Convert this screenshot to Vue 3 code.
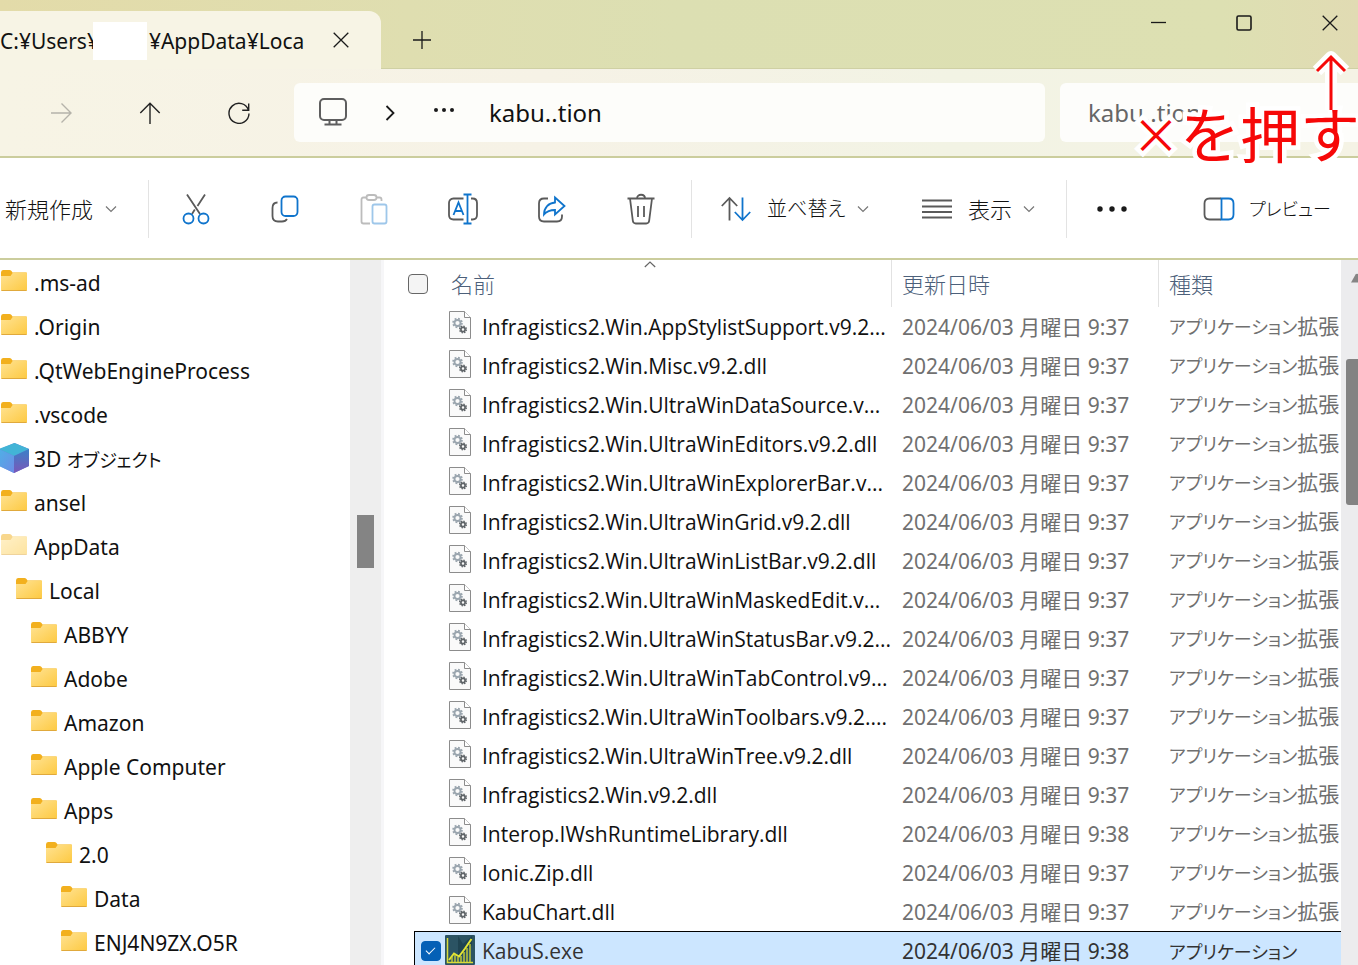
<script setup>
import { ref } from 'vue'

const tree = [
  { name: '.ms-ad', level: 0 },
  { name: '.Origin', level: 0 },
  { name: '.QtWebEngineProcess', level: 0 },
  { name: '.vscode', level: 0 },
  { name: '3D ', kana: 'オブジェクト', level: 0, kind: 'cube' },
  { name: 'ansel', level: 0 },
  { name: 'AppData', level: 0, kind: 'hidden' },
  { name: 'Local', level: 1 },
  { name: 'ABBYY', level: 2 },
  { name: 'Adobe', level: 2 },
  { name: 'Amazon', level: 2 },
  { name: 'Apple Computer', level: 2 },
  { name: 'Apps', level: 2 },
  { name: '2.0', level: 3 },
  { name: 'Data', level: 4 },
  { name: 'ENJ4N9ZX.O5R', level: 4 },
]

const dll = (name, time = '9:37') => ({
  name,
  date: `2024/06/03 月曜日 ${time}`,
  suffix: '拡張',
})

const files = [
  dll('Infragistics2.Win.AppStylistSupport.v9.2...'),
  dll('Infragistics2.Win.Misc.v9.2.dll'),
  dll('Infragistics2.Win.UltraWinDataSource.v...'),
  dll('Infragistics2.Win.UltraWinEditors.v9.2.dll'),
  dll('Infragistics2.Win.UltraWinExplorerBar.v...'),
  dll('Infragistics2.Win.UltraWinGrid.v9.2.dll'),
  dll('Infragistics2.Win.UltraWinListBar.v9.2.dll'),
  dll('Infragistics2.Win.UltraWinMaskedEdit.v...'),
  dll('Infragistics2.Win.UltraWinStatusBar.v9.2...'),
  dll('Infragistics2.Win.UltraWinTabControl.v9...'),
  dll('Infragistics2.Win.UltraWinToolbars.v9.2....'),
  dll('Infragistics2.Win.UltraWinTree.v9.2.dll'),
  dll('Infragistics2.Win.v9.2.dll'),
  dll('Interop.IWshRuntimeLibrary.dll', '9:38'),
  dll('Ionic.Zip.dll'),
  dll('KabuChart.dll'),
  { name: 'KabuS.exe', date: '2024/06/03 月曜日 9:38', suffix: '', selected: true },
]

const query = ref('kabu..tion')
const allChecked = ref(false)
const exeChecked = ref(true)
</script>

<template>
  <div class="window">
    <header class="titlebar">
      <div class="tab">
        <span class="tab-title"><span>C:¥Users¥</span><span class="mask"></span><span>¥AppData¥Loca</span></span>
        <button class="tab-close" aria-label="タブを閉じる">
          <svg width="16" height="16" viewBox="0 0 16 16"><path d="M.7.7l14.6 14.6M15.3.7L.7 15.3" /></svg>
        </button>
      </div>
      <button class="tab-new" aria-label="新しいタブ">
        <svg width="18" height="18" viewBox="0 0 18 18"><path d="M9 0v18M0 9h18" /></svg>
      </button>
      <div class="controls">
        <button aria-label="最小化"><svg width="16" height="16" viewBox="0 0 16 16"><path d="M1 7.500h15" /></svg></button>
        <button aria-label="最大化"><svg width="16" height="16" viewBox="0 0 16 16"><rect x="1" y="1" width="14" height="14" rx="1.5" stroke-width="1.6" /></svg></button>
        <button aria-label="閉じる"><svg width="16" height="16" viewBox="0 0 16 16"><path d="M.7.7l14.6 14.6M15.3.7L.7 15.3" /></svg></button>
      </div>
    </header>

    <nav class="navbar">
      <button class="nav-btn disabled" aria-label="進む" disabled>
        <svg width="22" height="22" viewBox="0 0 22 22"><path d="M1 11h20M11.500 1.500L21 11l-9.500 9.500" /></svg>
      </button>
      <button class="nav-btn" aria-label="上へ">
        <svg width="22" height="22" viewBox="0 0 22 22"><path d="M11 22V1.500M1.300 11L11 1.300 20.700 11" /></svg>
      </button>
      <button class="nav-btn" aria-label="更新">
        <svg width="22" height="22" viewBox="0 0 22 22"><path d="M20.500 8.200A10 10 0 1 0 21 11.500M20.700 1.500v6.700h-6.500" /></svg>
      </button>
      <div class="address">
        <button class="pc" aria-label="PC">
          <svg width="30" height="30" viewBox="0 0 30 30"><rect x="2" y="1" width="26" height="21" rx="4" /><path d="M11.500 22V26.500M18.500 22V26.500M6.500 26.500h17" /></svg>
        </button>
        <svg class="crumb-sep" width="10" height="16" viewBox="0 0 10 16"><path d="M1.500 1l7 7-7 7" /></svg>
        <button class="crumb-more" aria-label="その他の場所">
          <svg width="22" height="6" viewBox="0 0 22 6"><circle cx="3" cy="3" r="2" /><circle cx="11" cy="3" r="2" /><circle cx="19" cy="3" r="2" /></svg>
        </button>
        <button class="crumb">kabu..tion</button>
      </div>
      <input v-model="query" class="search" type="text" aria-label="検索" />
    </nav>

    <div class="toolbar">
      <button class="new">新規作成
        <svg class="chev" width="12" height="8" viewBox="0 0 12 8"><path d="M1 1.500l5 5 5-5" /></svg>
      </button>
      <span class="sep"></span>
      <div class="icons">
        <button aria-label="切り取り">
          <svg width="32" height="32" viewBox="0 0 32 32"><path class="g" d="M7 1.500l13 19.500M25 1.500L17.500 13M14.800 16.500L12 21" /><g class="b"><circle cx="8.500" cy="25.500" r="5" /><circle cx="23.500" cy="25.500" r="5" /></g></svg>
        </button>
        <button aria-label="コピー">
          <svg width="32" height="32" viewBox="0 0 32 32"><path class="g" d="M8.500 9.500C5 9.500 3.500 11.500 3.500 15v8c0 3.500 2 5.500 5.500 5.500h4c2.500 0 4-.7 5-2.500" /><rect class="b" x="12.500" y="3.500" width="16" height="19.500" rx="4" /></svg>
        </button>
        <button aria-label="貼り付け" disabled>
          <svg class="faded" width="32" height="32" viewBox="0 0 32 32"><path class="g" d="M8 4.500H5.500c-1.500 0-2 .8-2 2v22c0 1.500.8 2 2 2H12M19 4.500h2.500c1.500 0 2 .8 2 2V8" /><rect class="g" x="8.500" y="2" width="10" height="5" rx="2.500" /><rect class="b" x="14.500" y="11.500" width="14" height="19" rx="2" /></svg>
        </button>
        <button aria-label="名前の変更">
          <svg width="32" height="32" viewBox="0 0 32 32"><path class="g" d="M16.500 5.500h-10C3.500 5.500 2 7.500 2 10v12c0 3 2 4.500 4.500 4.500h10M24 5.500h1.500c3 0 4.500 2 4.500 4.500v12c0 3-2 4.500-4.500 4.500H24" /><path class="b" d="M16.500 1.500h8M16.500 30.500h8M20.500 1.500v29M6.500 22l5-12.500 5 12.500M8.500 18h6" /></svg>
        </button>
        <button aria-label="共有">
          <svg width="32" height="32" viewBox="0 0 32 32"><path class="g" d="M12 5.500H8C4.500 5.500 3 7.500 3 10.500v13c0 3.500 2 5 5 5h13c3.500 0 5-2 5-5v-2" /><path class="b" d="M19 4.500l9.500 8.500-9.500 8.500V17c-5 0-8 1-11 4.500 0-7 4.500-11.500 11-12z" /></svg>
        </button>
        <button aria-label="削除">
          <svg width="32" height="32" viewBox="0 0 32 32"><path class="g" d="M2.500 5.500h27M12 5.500c0-5 8-5 8 0M5 5.500l2.800 22c.2 2 1.200 3 3 3h10.400c1.800 0 2.800-1 3-3L27 5.500M13 13v11M19 13v11" /></svg>
        </button>
      </div>
      <span class="sep"></span>
      <button class="sort">
        <svg width="30" height="30" viewBox="0 0 30 30"><path class="g" d="M8.500 26.500V4M.8 12L8.500 4l7.700 8" /><path class="b" d="M21.500 3.500V26M13.800 18l7.700 8 7.700-8" /></svg>
        並べ替え
        <svg class="chev" width="12" height="8" viewBox="0 0 12 8"><path d="M1 1.500l5 5 5-5" /></svg>
      </button>
      <button class="view">
        <svg width="30" height="30" viewBox="0 0 30 30"><path class="g" d="M0 6.500h30M0 12.500h30M0 18h30M0 23.500h30" /></svg>
        表示
        <svg class="chev" width="12" height="8" viewBox="0 0 12 8"><path d="M1 1.500l5 5 5-5" /></svg>
      </button>
      <span class="sep"></span>
      <button class="more" aria-label="もっと見る">
        <svg width="30" height="6" viewBox="0 0 30 6"><circle cx="3" cy="3" r="2.700" /><circle cx="15" cy="3" r="2.700" /><circle cx="27" cy="3" r="2.700" /></svg>
      </button>
      <button class="preview">
        <svg width="32" height="24" viewBox="0 0 32 24"><path class="g" d="M18 1.500H6.500C3 1.500 1.500 3.500 1.500 6.500v11c0 3.500 2 5 5 5H18" /><path class="b" d="M18.500 1.500h7c3 0 5 2 5 5v11c0 3-2 5-5 5h-7z" /></svg>
        <span class="kana">プレビュー</span>
      </button>
    </div>

    <div class="body">
      <aside class="sidebar">
        <ul class="tree">
          <li v-for="node in tree" :key="node.name" :class="'level-' + node.level">
            <svg v-if="node.kind === 'cube'" width="30" height="30" viewBox="0 0 30 30">
              <path d="M14.500 0L29 6v17L14 30 0 23V6z" fill="#6a7fd6" />
              <path d="M14.500 0L29 6l-15 7L-1 6z" fill="#42b4d6" />
              <path d="M-1 6l15 7v17L-1 23z" fill="url(#cube-left)" />
              <path d="M14 13l15-7v17l-15 7z" fill="url(#cube-right)" />
            </svg>
            <svg v-else width="30" height="30" viewBox="0 0 30 30" :class="{ dim: node.kind === 'hidden' }">
              <path d="M1 5.500Q1 3 3 3h6.500q1 0 2 1l1 1.500H26q1 0 1 1V12H1z" fill="#f2b01e" />
              <path d="M1 9h9.500l2.500-3.500h13q1 0 1 1v16q0 1.500-1 1.500H2q-1 0-1-1.500z" fill="url(#folder-face)" />
              <path d="M1.500 23.500h25" stroke="#e0a93c" />
            </svg>
            <span class="node-name">{{ node.name }}<span v-if="node.kana" class="kana">{{ node.kana }}</span></span>
          </li>
        </ul>
        <div class="side-scroll"><div class="side-thumb"></div></div>
      </aside>

      <main class="files">
        <svg class="sort-mark" width="12" height="7" viewBox="0 0 12 7"><path d="M.8 6L6 1l5.200 5" /></svg>
        <table>
          <colgroup>
            <col class="c-gutter" /><col class="c-name" /><col class="c-date" /><col />
          </colgroup>
          <thead>
            <tr>
              <th colspan="2"><div class="name-head"><input v-model="allChecked" type="checkbox" aria-label="すべて選択" />名前</div></th>
              <th>更新日時</th>
              <th>種類</th>
            </tr>
          </thead>
          <tbody>
            <tr v-for="file in files" :key="file.name" :class="{ selected: file.selected }">
              <td></td>
              <td>
                <div class="name-cell">
                  <span class="check"><input v-if="file.selected" v-model="exeChecked" type="checkbox" :aria-label="file.name" /></span>
                  <svg v-if="file.selected" width="30" height="30" viewBox="0 0 30 30">
                    <rect width="30" height="30" rx="1" fill="#2b5363" />
                    <path d="M13 1l5 8 9-8v9L13 24z" fill="#1f4351" />
                    <path d="M2.500 3v24.500H28" fill="none" stroke="#d9dc3a" stroke-width="1.500" />
                    <path d="M4 25l5-6.500 5 3 6-8L26.500 4" fill="none" stroke="#e3e534" stroke-width="2" />
                    <path d="M7 22v5M10 20v7M13 22v5M16 21v6M19 17v10M22 13v14M25 9v18" stroke="#c9cf35" stroke-width="1.400" />
                  </svg>
                  <svg v-else width="30" height="30" viewBox="0 0 30 30">
                    <path d="M4.500 1.500h15l6 6v21h-21z" fill="#fafafa" stroke="#8c8c8c" />
                    <path d="M19.500 1.500v6h6" fill="#fff" stroke="#8c8c8c" />
                    <g fill="none">
                      <circle cx="12.500" cy="13" r="4.400" stroke="#9aa5ae" stroke-width="1.800" stroke-dasharray="1.800 1.655" />
                      <circle cx="12.500" cy="13" r="3" stroke="#9aa5ae" stroke-width="1.800" />
                      <circle cx="18" cy="19.500" r="3.300" stroke="#5f6468" stroke-width="1.500" stroke-dasharray="1.400 1.192" />
                      <circle cx="18" cy="19.500" r="2.100" stroke="#5f6468" stroke-width="1.700" />
                    </g>
                  </svg>
                  <span>{{ file.name }}</span>
                </div>
              </td>
              <td>{{ file.date }}</td>
              <td><span class="kana">アプリケーション</span>{{ file.suffix }}</td>
            </tr>
          </tbody>
        </table>
      </main>
      <div class="main-scroll">
        <svg width="14" height="10" viewBox="0 0 14 10"><path d="M1 9.500L5.500 1.500Q7 0 8.500 1.500L13 9.500z" /></svg>
        <div class="main-thumb"></div>
      </div>
    </div>

    <div class="note">
      <svg width="40" height="66" viewBox="0 0 40 66">
        <path class="halo" d="M20 60V7M6 21L20 7l14 14" />
        <path class="ink" d="M20 60V7M6 21L20 7l14 14" />
      </svg>
      <div class="note-text"><span class="cross">×</span>を押す</div>
    </div>

    <svg class="defs" width="0" height="0" aria-hidden="true">
      <defs>
        <linearGradient id="folder-face" x1="0" y1="0" x2="1" y2="1"><stop offset="0" stop-color="#ffe394" /><stop offset="1" stop-color="#fdc941" /></linearGradient>
        <linearGradient id="cube-left" x1="0" y1="0" x2="1" y2="1"><stop offset="0" stop-color="#4fb0e6" /><stop offset="1" stop-color="#6d8be6" /></linearGradient>
        <linearGradient id="cube-right" x1="0" y1="0" x2="0" y2="1"><stop offset="0" stop-color="#3a80c8" /><stop offset="1" stop-color="#7b57b8" /></linearGradient>
      </defs>
    </svg>
  </div>
</template>

<style>
body {
  margin: 0;
  overflow: hidden;
}
</style>

<style scoped>
.window {
  position: relative;
  display: flex;
  flex-direction: column;
  height: 100vh;
  overflow: hidden;
  background: #fff;
  color: #111;
  font-family: "Noto Sans", "Noto Sans CJK JP", sans-serif;
  font-size: 21px;
  line-height: 30px;
  font-feature-settings: "palt";
  white-space: nowrap;
}
button {
  display: flex;
  align-items: center;
  justify-content: center;
  flex: none;
  margin: 0;
  padding: 0;
  border: 0;
  background: none;
  color: inherit;
  font: inherit;
  font-feature-settings: inherit;
}
svg {
  display: block;
  flex: none;
  fill: none;
  stroke: none;
}
.titlebar {
  display: flex;
  flex: none;
  height: 69px;
  box-sizing: border-box;
  border-bottom: 1px solid #cfd0a4;
  background: linear-gradient(90deg, #e3dba9 0, #dfdeb0 30%, #dcdfb2 50%, #dde0b2 90%, #e1dbb3 100%);
}
.titlebar svg {
  stroke: #1a1a1a;
  stroke-width: 1.3;
}
.tab {
  display: flex;
  width: 381px;
  height: 58px;
  margin-top: 11px;
  background: #f7f4e5;
  border-radius: 0 12px 0 0;
}
.tab-title {
  display: flex;
  width: 306px;
  height: 60px;
  align-items: center;
}
.tab-title span {
  flex: none;
}
.mask {
  width: 54px;
  height: 38px;
  margin: 0 2px 0 -6px;
  background: #fff;
}
.tab-close {
  width: 70px;
  height: 57px;
}
.tab-new {
  width: 82px;
  height: 80px;
}
.controls {
  display: flex;
  height: 46px;
  margin-left: auto;
  margin-right: -15px;
}
.controls button {
  width: 86px;
}
.navbar {
  display: flex;
  flex: none;
  align-items: flex-start;
  height: 89px;
  box-sizing: border-box;
  padding: 14px 0 0 16px;
  border-bottom: 2px solid #cbcd9d;
  background: linear-gradient(90deg, #f7f4e5, #f6f2e6 40%, #f2f3e4 70%, #f5f3e5);
}
.nav-btn {
  width: 89px;
  height: 60px;
}
.nav-btn svg {
  stroke: #222;
  stroke-width: 1.4;
}
.nav-btn.disabled svg {
  stroke: #b5b3aa;
}
.address {
  display: flex;
  align-items: center;
  flex: 1;
  height: 59px;
  margin: 0 15px 0 11px;
  border-radius: 6px;
  background: #fdfdfa;
}
.pc {
  width: 78px;
  height: 54px;
}
.pc svg {
  stroke: #5e5e5e;
  stroke-width: 2;
}
.crumb-sep {
  margin: 0 18px 0 13px;
  stroke: #1a1a1a;
  stroke-width: 1.8;
}
.crumb-more {
  width: 62px;
  height: 50px;
}
.crumb-more svg {
  margin-bottom: 6px;
  fill: #1a1a1a;
}
.crumb {
  padding-left: 14px;
  font-size: 24px;
}
.search {
  flex: none;
  width: 298px;
  height: 59px;
  box-sizing: border-box;
  padding: 0 0 0 28px;
  border: 0;
  border-radius: 6px 0 0 6px;
  outline: 0;
  background: #fdfdfb;
  color: #666;
  font: inherit;
  font-size: 24px;
}
.toolbar {
  display: flex;
  flex: none;
  align-items: center;
  height: 102px;
  box-sizing: border-box;
  padding-top: 2px;
  border-bottom: 2px solid #cbcd9d;
  font-weight: 300;
  font-size: 22px;
}
.toolbar button {
  height: 60px;
}
.sep {
  flex: none;
  width: 1px;
  height: 58px;
  background: #e3e3e3;
}
.g {
  stroke: #5a5a5a;
  stroke-width: 1.8;
}
.b {
  stroke: #0f74cc;
  stroke-width: 1.8;
}
.faded {
  opacity: 0.4;
}
.chev {
  stroke: #777;
  stroke-width: 1.2;
}
.new .chev {
  margin-left: 12px;
}
.toolbar .new {
  width: 148px;
  justify-content: flex-start;
  padding-left: 5px;
}
.icons {
  display: flex;
  margin: 0 6px 0 2px;
}
.icons button {
  width: 89px;
}
.toolbar .sort {
  width: 200px;
  justify-content: flex-start;
  gap: 0 16px;
  padding-left: 29px;
  font-size: 20px;
}
.toolbar .sort .chev,
.toolbar .view .chev {
  margin-left: -5px;
}
.toolbar .view {
  width: 174px;
  justify-content: flex-start;
  gap: 0 16px;
  padding-left: 30px;
}
.more {
  width: 90px;
}
.more svg {
  fill: #1a1a1a;
}
.preview {
  gap: 14px;
  padding-left: 46px;
}
.body {
  display: flex;
  flex: 1;
  min-height: 0;
}
.sidebar {
  display: flex;
  flex: none;
  width: 381px;
  border-right: 3px solid #f6f6f8;
  overflow: hidden;
}
.tree {
  flex: 1;
  margin: 0;
  padding: 1px 0 0;
  list-style: none;
}
.tree li {
  display: flex;
  align-items: center;
  gap: 4px;
  height: 44px;
}
.tree svg {
  margin-bottom: 2px;
}
.node-name {
  white-space: pre;
}
.level-1 {
  padding-left: 15px;
}
.level-2 {
  padding-left: 30px;
}
.level-3 {
  padding-left: 45px;
}
.level-4 {
  padding-left: 60px;
}
.dim {
  opacity: 0.5;
}
.side-scroll {
  width: 31px;
  background: #eee;
}
.side-thumb {
  width: 17px;
  height: 53px;
  margin: 255px auto 0;
  background: #848484;
}
.files {
  position: relative;
  flex: 1;
  min-width: 0;
  overflow: hidden;
}
.sort-mark {
  position: absolute;
  left: 260px;
  top: 1px;
  stroke: #666;
  stroke-width: 1.2;
}
table {
  width: 100%;
  table-layout: fixed;
  border-collapse: separate;
  border-spacing: 0;
}
.c-gutter {
  width: 30px;
}
.c-name {
  width: 477px;
}
.c-date {
  width: 267px;
}
th,
td {
  box-sizing: border-box;
  padding: 0 0 0 11px;
  overflow: hidden;
  text-align: left;
}
th {
  height: 47px;
  padding-left: 10px;
  border-left: 1px solid #e2e2e2;
  color: #4c607a;
  font-weight: 300;
  font-size: 22px;
}
th:first-child {
  padding-left: 24px;
  border-left: 0;
}
.name-head {
  display: flex;
  align-items: center;
  gap: 23px;
}
td {
  height: 39px;
  color: #707070;
}
td:nth-child(2) {
  padding-left: 7px;
  color: #111;
  font-family: "Open Sans", "Noto Sans", sans-serif;
}
.name-cell {
  display: flex;
  align-items: center;
  height: 38px;
}
.name-cell svg {
  margin: 0 7px 3px 0;
}
.check {
  flex: none;
  width: 24px;
}
input[type="checkbox"] {
  display: block;
  flex: none;
  appearance: none;
  width: 20px;
  height: 20px;
  margin: 0;
  border: 1px solid #666;
  border-radius: 4px;
  background: #f4f4f4;
}
input[type="checkbox"]:checked {
  border-color: #0560b6;
  background: #0560b6;
}
input[type="checkbox"]:checked::before {
  content: "";
  display: block;
  width: 8px;
  height: 4px;
  margin: 5px 0 0 4px;
  border: solid #fff;
  border-width: 0 0 1px 1px;
  transform: rotate(-45deg);
}
.selected td:not(:first-child) {
  border-top: 1px solid #000;
  background: #cce6ff;
  color: #333;
}
.selected td:nth-child(2) {
  border-left: 1px solid #000;
  padding-left: 6px;
}
.kana {
  font-size: 18px;
}
.main-scroll {
  flex: none;
  width: 17px;
  overflow: hidden;
  background: #ececee;
}
.main-scroll svg {
  margin: 13px 0 76px 9px;
  fill: #858585;
}
.main-thumb {
  width: 16px;
  height: 146px;
  margin-left: 5px;
  border-radius: 3px;
  background: #838383;
}
.note {
  position: absolute;
  left: 1132px;
  top: 50px;
  color: #f60808;
  font-family: "Noto Sans CJK JP", sans-serif;
  font-size: 60px;
  line-height: 58px;
  font-feature-settings: normal;
  -webkit-text-stroke: 9px #fff;
  paint-order: stroke fill;
  pointer-events: none;
}
.note svg {
  position: relative;
  z-index: 1;
  margin-left: 179px;
  margin-bottom: -13px;
}
.note-text {
  display: flex;
  align-items: center;
}
.cross {
  font-size: 48px;
}
.halo {
  stroke: #fff;
  stroke-width: 12;
  stroke-linejoin: round;
}
.ink {
  stroke: #f60808;
  stroke-width: 3;
}
.defs {
  position: absolute;
}
</style>
